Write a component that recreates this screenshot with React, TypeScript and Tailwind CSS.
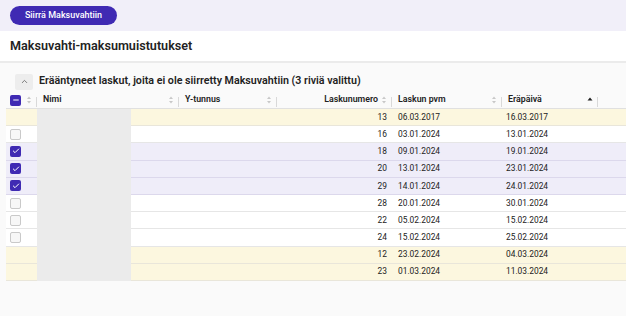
import { ChevronUp, Check, Minus } from "lucide-react";

type Row = {
  nro: number;
  pvm: string;
  era: string;
  state: "overdue" | "selected" | "open";
};

const rows: Row[] = [
  { nro: 13, pvm: "06.03.2017", era: "16.03.2017", state: "overdue" },
  { nro: 16, pvm: "03.01.2024", era: "13.01.2024", state: "open" },
  { nro: 18, pvm: "09.01.2024", era: "19.01.2024", state: "selected" },
  { nro: 20, pvm: "13.01.2024", era: "23.01.2024", state: "selected" },
  { nro: 29, pvm: "14.01.2024", era: "24.01.2024", state: "selected" },
  { nro: 28, pvm: "20.01.2024", era: "30.01.2024", state: "open" },
  { nro: 22, pvm: "05.02.2024", era: "15.02.2024", state: "open" },
  { nro: 24, pvm: "15.02.2024", era: "25.02.2024", state: "open" },
  { nro: 12, pvm: "23.02.2024", era: "04.03.2024", state: "overdue" },
  { nro: 23, pvm: "01.03.2024", era: "11.03.2024", state: "overdue" },
];

const SortIcon = ({ active }: { active?: boolean }) =>
  active ? (
    <svg width="6" height="8" viewBox="0 0 6 8" className="shrink-0">
      <path d="M3 1.5 L5.5 4.5 H0.5 Z" fill="#222" />
    </svg>
  ) : (
    <svg width="6" height="8" viewBox="0 0 6 8" className="shrink-0">
      <path d="M3 0.5 L5 3 H1 Z" fill="#c8c8c8" />
      <path d="M3 7.5 L5 5 H1 Z" fill="#c8c8c8" />
    </svg>
  );

const HeaderCell = ({
  label,
  width,
  right,
  active,
}: {
  label: string;
  width: string;
  right?: boolean;
  active?: boolean;
}) => (
  <div className={`${width} flex items-center h-full`}>
    <span className={`flex-1 font-semibold text-[#222] ${right ? "text-right pr-[3px]" : "pl-[6px]"}`}>{label}</span>
    <SortIcon active={active} />
    <span className="w-px h-[10px] bg-[#d9d9d9] ml-[4px] self-end mb-[1px]" />
  </div>
);

const rowBg = {
  overdue: "bg-[#fcf7df] border-[#e9e6da]",
  selected: "bg-[#efedf9] border-[#dcd8ec]",
  open: "bg-white border-[#e6e6e6]",
};

const App = () => {
  return (
    <div className="w-[626px] h-[316px] bg-[#fafafa] overflow-hidden text-[#222] font-[Roboto,sans-serif]">
      {/* Toolbar */}
      <div className="h-[31px] bg-[#f1eff9] flex items-center px-[10px]">
        <button className="h-[19px] w-[107px] rounded-full bg-[#3f2ab3] text-white text-[9px] font-medium leading-none">
          Siirrä Maksuvahtiin
        </button>
      </div>

      {/* Title */}
      <div className="h-[32px] bg-white flex items-center px-[10px] pt-[1px] border-b-2 border-[#ebebeb]">
        <h1 className="text-[12.6px] font-semibold">Maksuvahti-maksumuistutukset</h1>
      </div>

      {/* Section */}
      <div className="pl-[6px] pt-[10px]">
        <div className="flex items-center gap-[6px] pl-[9px] h-[17px]">
          <span className="w-[18px] h-[16px] shrink-0 bg-[#ededed] rounded-[2px] flex items-center justify-center">
            <ChevronUp size={9} strokeWidth={2} color="#555" />
          </span>
          <span className="text-[10.7px] font-semibold whitespace-nowrap">
            Erääntyneet laskut, joita ei ole siirretty Maksuvahtiin (3 riviä valittu)
          </span>
        </div>

        <div className="mt-[2px] text-[8.4px]">
          {/* Header */}
          <div className="flex h-[17px] border-b border-[#e0e0e0] items-center text-[8.8px]">
            <div className="w-[31px] flex items-center h-full pl-[4px]">
              <span className="w-[11px] h-[11px] rounded-[2px] bg-[#3f2ab3] flex items-center justify-center">
                <Minus size={8} strokeWidth={3} color="white" />
              </span>
              <span className="ml-[5px]">
                <SortIcon />
              </span>
              <span className="w-px h-[10px] bg-[#d9d9d9] ml-auto self-end mb-[1px]" />
            </div>
            <HeaderCell label="Nimi" width="w-[142px]" />
            <HeaderCell label="Y-tunnus" width="w-[98px]" />
            <HeaderCell label="Laskunumero" width="w-[115px]" right />
            <HeaderCell label="Laskun pvm" width="w-[110px]" />
            <HeaderCell label="Eräpäivä" width="w-[96px]" active />
            <div className="flex-1" />
          </div>

          {/* Body */}
          {rows.map((r) => (
            <div key={r.nro} className={`flex h-[17.2px] items-center border-b ${rowBg[r.state]}`}>
              <div className="w-[31px] pl-[4px] flex items-center">
                {r.state === "selected" ? (
                  <span className="w-[11px] h-[11px] rounded-[2px] bg-[#3f2ab3] flex items-center justify-center">
                    <Check size={8} strokeWidth={3} color="white" />
                  </span>
                ) : r.state === "open" ? (
                  <span className="w-[11px] h-[11px] rounded-[2px] bg-[#f7f7f7] border border-[#c9c9c9]" />
                ) : null}
              </div>
              <div className="w-[142px] h-full flex">
                <div className="w-[94px] h-[calc(100%+1px)] bg-[#ebebeb]" />
              </div>
              <div className="w-[98px]" />
              <div className="w-[115px] text-right pr-[5px]">{r.nro}</div>
              <div className="w-[110px] pl-[6px]">{r.pvm}</div>
              <div className="w-[96px] pl-[4px]">{r.era}</div>
              <div className="flex-1" />
            </div>
          ))}
        </div>
      </div>
    </div>
  );
};

export default App;
